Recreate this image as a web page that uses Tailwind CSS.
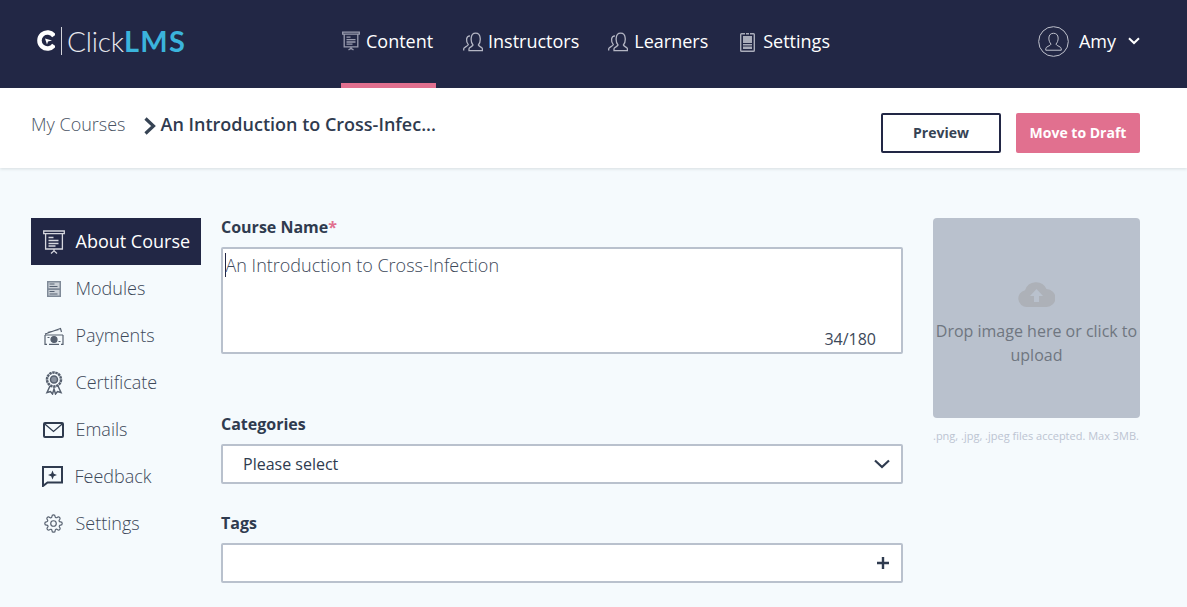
<!DOCTYPE html>
<html lang="en">
<head>
  <meta charset="UTF-8">
  <title>ClickLMS</title>
  <script src="https://cdn.jsdelivr.net/npm/@tailwindcss/browser@4"></script>
</head>
<body class="h-[607px] overflow-hidden bg-[#f5fafd] font-['Open_Sans',sans-serif] text-[#2f3b4f]">

  <!-- Top navigation -->
  <header class="flex h-[88px] items-stretch bg-[#222745] text-white">
    <div class="flex w-[341px] items-center pl-[37px] pb-[7px]">
      <svg width="18" height="21" viewBox="0 0 18 21" fill="none">
        <path d="M17 5.900A8 8 0 1 0 17 15.100" stroke="#fff" stroke-width="4.500"/>
        <path d="M8 8.500l7 2-4 1-1 3z" fill="#fff"/>
      </svg>
      <span class="ml-[6px] mr-[5px] h-[28px] w-px bg-white/80"></span>
      <span class="font-['Lato',sans-serif] text-[28px] leading-none font-light tracking-[-0.2px] text-[#e8e9ee]">Click<span class="text-[29px] font-bold tracking-[1.300px] text-[#3bb4dc]">LMS</span></span>
    </div>
    <nav class="flex items-stretch text-[18px]">
      <a class="flex h-[88px] w-[95px] items-center gap-[6px] border-b-[5px] border-[#e1708f] pb-[1px] pl-[1px]">
        <svg width="18" height="20" viewBox="0 0 18 20" fill="none" stroke="#9a9db0" stroke-width="1.300">
          <path d="M.7 1.200h16.600v2H.7zM2.200 3.200v12.600h13.600V3.200M9 15.800v1.500M6.500 19 9 17.300l2.500 1.700"/>
          <path d="M4.500 6.200h4M4.500 8.600h9M4.500 11h9M4.500 13.200h6"/>
        </svg>
        Content
      </a>
      <a class="ml-[27px] flex items-center gap-[5px] pb-[5px]">
        <svg width="20" height="20" viewBox="0 0 20 20" fill="none" stroke="#b4b6c4" stroke-width="1.300">
          <path d="M.7 18.600v-1.800c0-1.600 4.200-2.600 4.600-4.200C3.800 11 3.400 9 3.600 7c.2-2 1.600-3.200 3.400-3.200"/>
          <path d="M6 18.600v-1.800c0-1.600 3.600-2.200 4-3.800-1.600-1.600-2-4.400-1.800-6.800C8.400 3 10 1.200 12.600 1.200S17 3 17.200 6.200c.2 2.400-.2 5.200-1.800 6.800.4 1.600 4 2.200 4 3.800v1.800z"/>
        </svg>
        Instructors
      </a>
      <a class="ml-[29px] flex items-center gap-[6px] pb-[5px]">
        <svg width="20" height="20" viewBox="0 0 20 20" fill="none" stroke="#b4b6c4" stroke-width="1.300">
          <path d="M.7 18.600v-1.800c0-1.600 4.200-2.600 4.600-4.200C3.800 11 3.400 9 3.600 7c.2-2 1.600-3.200 3.400-3.200"/>
          <path d="M6 18.600v-1.800c0-1.600 3.600-2.200 4-3.800-1.600-1.600-2-4.400-1.800-6.800C8.400 3 10 1.200 12.600 1.200S17 3 17.200 6.200c.2 2.400-.2 5.200-1.800 6.800.4 1.600 4 2.200 4 3.800v1.800z"/>
        </svg>
        Learners
      </a>
      <a class="ml-[32px] flex items-center gap-[8px] pb-[5px]">
        <svg width="15" height="20" viewBox="0 0 15 20" fill="none">
          <rect x=".7" y="1.700" width="13.600" height="17.600" rx=".8" stroke="#a9acba" stroke-width="1.400"/>
          <rect x="3" y="4" width="9" height="13" fill="#a9acba"/>
          <path d="M5.500 .5h4v3h-4zM3 11.500h9M3 14h9" stroke="#222745"/>
        </svg>
        Settings
      </a>
    </nav>
    <div class="ml-auto flex items-center pr-[47px] pb-[6px] text-[18px]">
      <svg width="31" height="31" viewBox="0 0 32 32" fill="none" stroke="#c3c5cf" stroke-width="1">
        <circle cx="16" cy="16" r="15.300"/>
        <path d="M8 25v-1.500c0-2.500 4.500-2.500 5.500-4.800-1.500-1.500-2.300-3.700-2.300-6.200 0-3.200 2-5 4.800-5s4.800 1.800 4.800 5c0 2.500-.8 4.700-2.300 6.200 1 2.300 5.500 2.300 5.500 4.800V25z"/>
      </svg>
      <span class="ml-[10px]">Amy</span>
      <svg width="12" height="8" viewBox="0 0 12 8" fill="none" stroke="#fff" stroke-width="2" class="ml-[12px]"><path d="M1 1.200 6 6l5-4.800"/></svg>
    </div>
  </header>

  <!-- Breadcrumb bar -->
  <div class="flex h-[80px] items-center bg-white pl-[31px] pr-[47px] shadow-[0_1px_3px_rgba(90,110,110,0.2)]">
    <div class="mb-[7px] flex items-center">
      <span class="text-[18px] font-light text-[#4a5464]">My Courses</span>
      <svg width="12" height="18" viewBox="0 0 12 18" fill="none" stroke="#364354" stroke-width="3.200" class="ml-[18px] mt-[2px]"><path d="M1.500 1.500 9.500 9l-8 7.500"/></svg>
      <span class="ml-[5px] text-[18px] font-semibold text-[#2f3b4f]">An Introduction to Cross-Infec...</span>
    </div>
    <div class="ml-auto flex gap-[15px] pt-[10px]">
      <button class="h-[40px] w-[120px] rounded-[2px] border-2 border-[#222745] bg-white pb-[2px] text-[14px] font-bold text-[#364354]">Preview</button>
      <button class="h-[40px] w-[124px] rounded-[2px] bg-[#e1708f] pb-[2px] text-[14px] font-bold text-white">Move to Draft</button>
    </div>
  </div>

  <!-- Page body -->
  <main class="flex pl-[31px] pr-[47px] pt-[50px]">
    <aside class="w-[170px] shrink-0 text-[18px] font-light text-[#3c4859]">
      <a class="flex h-[47px] items-center bg-[#222745] pl-[12px] font-normal text-white">
        <svg width="22" height="24" viewBox="0 0 22 24" fill="none" stroke="#d5d6dd" stroke-width="1.300">
          <path d="M.7 1h20.600v2.600H.7zM2.600 3.600v15.400h16.800V3.600M11 19v1.800M8 23.400l3-2.600 3 2.600"/>
          <path d="M5.500 7.500h5M5.500 10.500h10M5.500 13.500h10M5.500 16h7"/>
        </svg>
        <span class="ml-[10.500px]">About Course</span>
      </a>
      <a class="flex h-[47px] items-center pl-[16px]">
        <svg width="14" height="16" viewBox="0 0 14 16"><rect width="14" height="16" fill="#7f8a98"/><path d="M1.500 1.500h11v5.800h-11zM1.500 9h11v5.500h-11z" fill="#c9cfd6"/><path d="M2.500 3h5M2.500 5.500h8M2.500 10.500h5M2.500 13h8" stroke="#566273" stroke-width="1.200"/></svg>
        <span class="ml-[14.500px]">Modules</span>
      </a>
      <a class="flex h-[47px] items-center pl-[13px]">
        <svg width="20" height="18" viewBox="0 0 20 18" fill="none" stroke="#56606f" stroke-width="1.200">
          <path d="M1 7 16.500 1.500l1 3.500M3.500 5.500 15 2.500M1 8h18M1 8v9.300h2M19 8v9.300h-2M5 17.300h10"/>
          <circle cx="10" cy="12.500" r="3" fill="#56606f"/>
          <path d="M3.500 10.500h2M14.500 14.500h2"/>
        </svg>
        <span class="ml-[11.500px]">Payments</span>
      </a>
      <a class="flex h-[47px] items-center pl-[14px]">
        <svg width="18" height="24" viewBox="0 0 18 24" fill="none" stroke="#56606f" stroke-width="1.500">
          <circle cx="9" cy="8.500" r="7" stroke-dasharray="2.500 .6" stroke-width="2.500"/>
          <circle cx="9" cy="8.500" r="3.500" fill="#8a93a0"/>
          <path d="M5 15 2 21.500l3.500-1 2 2.500L9 18l1.500 5 2-2.500 3.500 1L13 15"/>
        </svg>
        <span class="ml-[12.500px]">Certificate</span>
      </a>
      <a class="flex h-[47px] items-center pl-[12px]">
        <svg width="21" height="16" viewBox="0 0 21 16" fill="none" stroke="#2f3b4f">
          <rect x="1" y="1" width="19" height="14" rx="1" stroke-width="2"/>
          <path d="M1.500 1.800 10.500 9.500l9-7.700" stroke-width="1.300"/>
        </svg>
        <span class="ml-[11.500px]">Emails</span>
      </a>
      <a class="flex h-[47px] items-center pl-[11px]">
        <svg width="21" height="21" viewBox="0 0 21 21" fill="none">
          <path d="M1 1h19v15.500H5.500L1 20z" stroke="#2f3b4f" stroke-width="2"/>
          <path d="M10.500 4.500 11.800 7.700l3.200 1.300-3.200 1.300-1.300 3.200-1.300-3.200L6 9l3.200-1.300z" fill="#2f3b4f"/>
        </svg>
        <span class="ml-[11.500px]">Feedback</span>
      </a>
      <a class="flex h-[47px] items-center pl-[13px]">
        <svg width="19" height="19" viewBox="0 0 24 24" fill="none" stroke="#56606f" stroke-width="1.500">
          <circle cx="12" cy="12" r="3.500"/>
          <path d="M19.400 15a1.650 1.650 0 0 0 .33 1.820l.06.06a2 2 0 1 1-2.830 2.830l-.06-.06a1.650 1.650 0 0 0-2.800 1.170V21a2 2 0 1 1-4 0v-.09a1.650 1.650 0 0 0-2.800-1.170l-.06.06a2 2 0 1 1-2.830-2.830l.06-.06A1.650 1.650 0 0 0 3.090 14H3a2 2 0 1 1 0-4h.09a1.650 1.650 0 0 0 1.170-2.800l-.06-.06a2 2 0 1 1 2.830-2.830l.06.06A1.650 1.650 0 0 0 10 3.090V3a2 2 0 1 1 4 0v.09a1.650 1.650 0 0 0 2.800 1.170l.06-.06a2 2 0 1 1 2.830 2.830l-.06.06A1.650 1.650 0 0 0 20.910 10H21a2 2 0 1 1 0 4h-.09a1.650 1.650 0 0 0-1.510 1z"/>
        </svg>
        <span class="ml-[12.500px]">Settings</span>
      </a>
    </aside>

    <section class="ml-[20px] w-[682px] shrink-0">
      <label class="block text-[16px] leading-[19px] font-bold">Course Name<span class="text-[#e1708f]">*</span></label>
      <div class="relative mt-[10px] h-[107px] rounded-[2px] border-2 border-[#b9c1cd] bg-white pl-[1.500px] pt-[4px] text-[18px] leading-[24px] font-light text-[#3c4859]">
        <span class="border-l border-[#222745]">An Introduction to Cross-Infection</span>
        <span class="absolute bottom-[1px] right-[25px] text-[16px] font-normal">34/180</span>
      </div>
      <label class="mt-[60px] block text-[16px] leading-[20px] font-bold">Categories</label>
      <div class="mt-[10px] flex h-[40px] items-center justify-between rounded-[2px] border-2 border-[#b9c1cd] bg-white pl-[20px] pr-[11px] text-[16px]">
        Please select
        <svg width="16" height="10" viewBox="0 0 16 10" fill="none" stroke="#2f3b4f" stroke-width="2.200"><path d="M1 1.500 8 8l7-6.500"/></svg>
      </div>
      <label class="mt-[29px] block text-[16px] leading-[20px] font-bold">Tags</label>
      <div class="mt-[10px] flex h-[40px] items-center justify-end rounded-[2px] border-2 border-[#b9c1cd] bg-white pr-[12px]">
        <svg width="12" height="12" viewBox="0 0 12 12" fill="none" stroke="#2f3b4f" stroke-width="2.400"><path d="M6 0v12M0 6h12"/></svg>
      </div>
    </section>

    <section class="ml-[30px] w-[207px] shrink-0">
      <div class="flex h-[200px] flex-col items-center rounded-[4px] bg-[#b9c1cd] pt-[64px] text-center text-[16px] leading-[24px] text-[#6f7680]">
        <svg width="37" height="25" viewBox="0 0 37 25" class="mb-[12px]">
          <path d="M9 25a8.500 8.500 0 0 1-2-16.800A11.500 11.500 0 0 1 28.500 7a9 9 0 0 1 0 18z" fill="#adb1b8"/>
          <path d="M18.500 7l6.500 7h-4v6h-5v-6h-4z" fill="#b9c1cd"/>
        </svg>
        <span>Drop image here or click to upload</span>
      </div>
      <p class="mt-[10px] whitespace-nowrap pr-[2px] text-center text-[11px] leading-[16px] text-[#bcc4d2]">.png, .jpg, .jpeg files accepted. Max 3MB.</p>
    </section>
  </main>

</body>
</html>
